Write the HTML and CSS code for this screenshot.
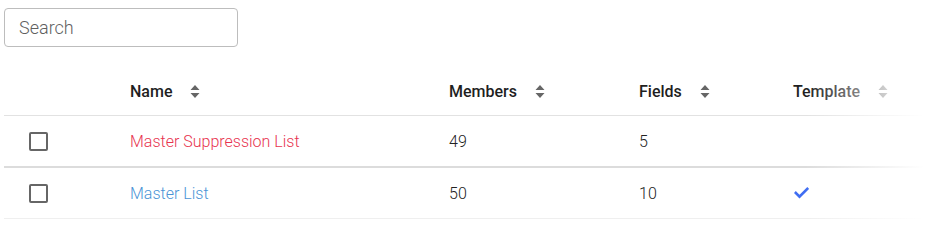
FILE: index.html
```html
<!DOCTYPE html>
<html>
<head>
<meta charset="utf-8">
<link rel="stylesheet" href="styles.css">
</head>
<body>
<div class="page">
  <input class="search" type="text" placeholder="Search">
  <div class="table-wrap">
    <div class="table">
      <div class="row head">
        <div class="cell"></div>
        <div class="cell th">Name <svg class="sort" viewBox="0 0 10 13" width="10" height="13"><path d="M5 0 L9.5 5 H0.5 Z M5 13 L0.5 8 H9.5 Z"/></svg></div>
        <div class="cell th">Members <svg class="sort" viewBox="0 0 10 13" width="10" height="13"><path d="M5 0 L9.5 5 H0.5 Z M5 13 L0.5 8 H9.5 Z"/></svg></div>
        <div class="cell th">Fields <svg class="sort" viewBox="0 0 10 13" width="10" height="13"><path d="M5 0 L9.5 5 H0.5 Z M5 13 L0.5 8 H9.5 Z"/></svg></div>
        <div class="cell th">Template <svg class="sort" viewBox="0 0 10 13" width="10" height="13"><path d="M5 0 L9.5 5 H0.5 Z M5 13 L0.5 8 H9.5 Z"/></svg></div>
      </div>
      <div class="row body first">
        <div class="cell check"><span class="box"></span></div>
        <div class="cell name red">Master Suppression List</div>
        <div class="cell num">49</div>
        <div class="cell num">5</div>
        <div class="cell"></div>
      </div>
      <div class="row body last">
        <div class="cell check"><span class="box"></span></div>
        <div class="cell name blue">Master List</div>
        <div class="cell num">50</div>
        <div class="cell num">10</div>
        <div class="cell"><svg class="tick" viewBox="0 0 15 12" width="15" height="12"><path d="M1.8 6 L5.5 9.7 L13.3 1.9" fill="none" stroke="#3f6df2" stroke-width="2.7" stroke-linecap="square"/></svg></div>
      </div>
    </div>
    <div class="fade"></div>
  </div>
</div>
</body>
</html>
```

FILE: styles.css
```css
html, body {
  margin: 0;
  padding: 0;
  background: #fff;
}
body {
  font-family: Roboto, "Liberation Sans", sans-serif;
  color: #333;
}
.page {
  padding: 8px 0 0 4px;
}
.search {
  display: block;
  box-sizing: border-box;
  width: 234px;
  height: 39px;
  border: 1px solid #bdbdbd;
  border-radius: 4px;
  padding: 0 14px;
  font-family: Roboto, "Liberation Sans", sans-serif;
  font-size: 18px;
  font-weight: 300;
  color: #555;
  outline: none;
}
.search::placeholder {
  color: #5f5f5f;
}
.table-wrap {
  position: relative;
  margin-top: 20px;
  width: 926px;
}
.table {
  display: flex;
  flex-direction: column;
}
.row {
  display: grid;
  grid-template-columns: 126px 319px 190px 154px 1fr;
  align-items: center;
}
.head {
  height: 48px;
  border-bottom: 1px solid #e2e2e2;
}
.body {
  height: 50px;
}
.first {
  border-bottom: 2px solid #dcdcdc;
}
.last {
  border-bottom: 1px solid #efefef;
}
.th {
  display: flex;
  align-items: center;
  font-size: 16px;
  font-weight: 500;
  color: #1f1f1f;
}
.sort {
  margin-left: 18px;
  fill: #666;
}
.check {
  padding-left: 25px;
  display: flex;
  align-items: center;
}
.box {
  display: block;
  width: 15px;
  height: 15px;
  border: 2px solid #666;
  border-radius: 2px;
}
.name {
  font-size: 16px;
  font-weight: 300;
}
.red {
  color: #e8344f;
}
.blue {
  color: #4a94d6;
}
.num {
  font-size: 16px;
  font-weight: 300;
  color: #222;
}
.tick {
  display: block;
  margin-left: 1px;
}
.fade {
  position: absolute;
  top: 0;
  right: 0;
  bottom: 0;
  width: 125px;
  background: linear-gradient(to right, rgba(255,255,255,0), #fff 95%);
  pointer-events: none;
}
```
